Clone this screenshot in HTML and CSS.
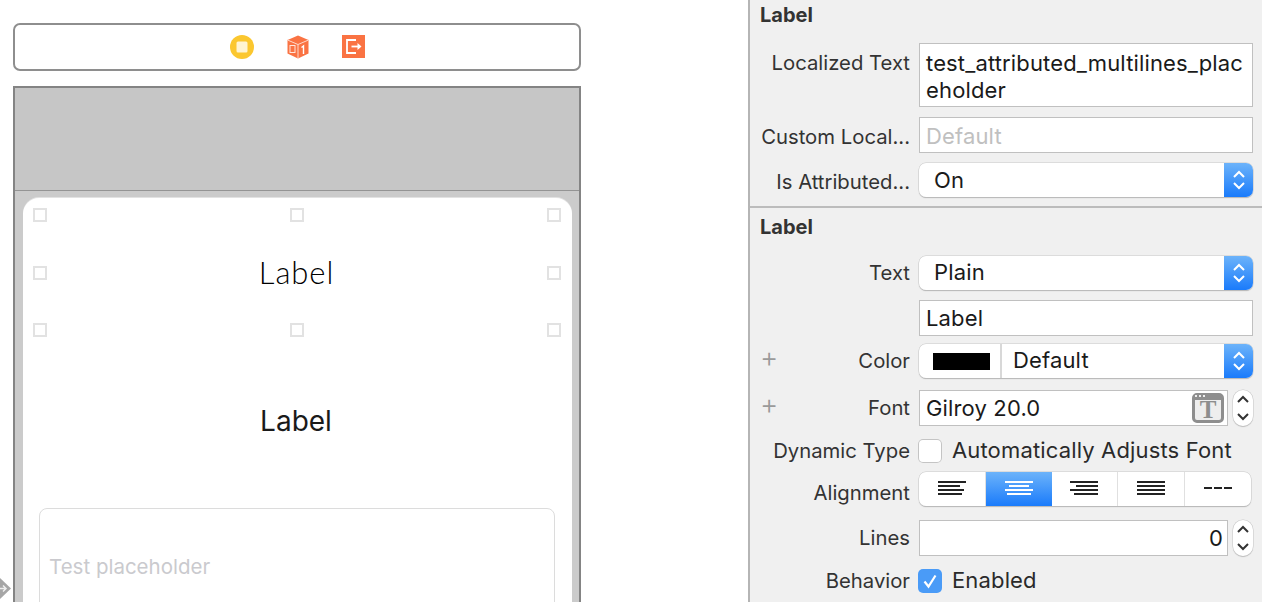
FILE: index.html
```html
<!DOCTYPE html>
<html lang="en">
<head>
<meta charset="utf-8">
<title>Storyboard inspector</title>
<link rel="stylesheet" href="styles.css">
</head>
<body>
<main class="canvas">
  <div class="scene-bar">
    <svg class="dock-icon" width="24" height="24" viewBox="0 0 24 24"><circle cx="12" cy="12" r="12" fill="#fbc72f"/><rect x="6.500" y="6.500" width="11" height="11" rx="1.500" fill="#fff4d2"/></svg>
    <svg class="dock-icon" width="24" height="24" viewBox="0 0 24 24"><path d="M12 .5 22.500 5v13.500L12 23.500 1.500 18.500V5z" fill="#fa7343"/><path d="M1.500 5 12 9.500 22.500 5M12 9.500v14" fill="none" stroke="#ffd9ca" stroke-width="1"/><rect x="4" y="10.500" width="5" height="7" fill="none" stroke="#ffe6dc" stroke-width="1"/><path d="M15.500 12.500 17.500 11v8" fill="none" stroke="#fff" stroke-width="1.400"/></svg>
    <svg class="dock-icon" width="24" height="24" viewBox="0 0 24 24"><rect width="23" height="23" fill="#fa7343"/><path d="M14 5H5v13h9" fill="none" stroke="#fff" stroke-width="1.800"/><path d="M9.500 11.500h7" stroke="#fff" stroke-width="1.800"/><path d="m15.500 8 4 3.500-4 3.500z" fill="#fff"/></svg>
  </div>
  <div class="scene">
    <div class="nav-area"></div>
    <section class="card">
      <span class="handle handle-tl"></span><span class="handle handle-tc"></span><span class="handle handle-tr"></span>
      <span class="handle handle-ml"></span><span class="handle handle-mr"></span>
      <span class="handle handle-bl"></span><span class="handle handle-bc"></span><span class="handle handle-br"></span>
      <div class="title-label">Label</div>
      <div class="body-label">Label</div>
      <div class="text-box">Test placeholder</div>
    </section>
  </div>
  <svg class="entry-arrow" width="12" height="24" viewBox="0 0 12 24"><path d="M0 1 11 11.500 0 22z" fill="#a6a6a6"/><path d="M0 11.500h6M3 8.500l3 3-3 3" fill="none" stroke="#eee" stroke-width="1.500"/></svg>
</main>
<aside class="inspector">
  <section class="group group-first">
    <h2 class="group-title">Label</h2>
    <div class="row row-top">
      <div class="row-label">Localized Text</div>
      <div class="field field-multi">test_attributed_multilines_plac<br>eholder</div>
    </div>
    <div class="row gap-10">
      <div class="row-label">Custom Local...</div>
      <div class="field field-placeholder">Default</div>
    </div>
    <div class="row gap-10">
      <div class="row-label">Is Attributed...</div>
      <div class="select"><span class="select-value">On</span><span class="select-arrows"><svg width="16" height="22" viewBox="0 0 16 22"><path d="m3 8 5-5 5 5M3 14l5 5 5-5" fill="none" stroke="#fff" stroke-width="2"/></svg></span></div>
    </div>
  </section>
  <section class="group group-second">
    <h2 class="group-title">Label</h2>
    <div class="row row-second">
      <div class="row-label">Text</div>
      <div class="select"><span class="select-value">Plain</span><span class="select-arrows"><svg width="16" height="22" viewBox="0 0 16 22"><path d="m3 8 5-5 5 5M3 14l5 5 5-5" fill="none" stroke="#fff" stroke-width="2"/></svg></span></div>
    </div>
    <div class="row gap-10">
      <div class="row-label"></div>
      <div class="field">Label</div>
    </div>
    <div class="row gap-8">
      <div class="row-label"><span class="plus">+</span>Color</div>
      <div class="select"><span class="swatch-cell"><span class="swatch"></span></span><span class="select-value select-value-color">Default</span><span class="select-arrows"><svg width="16" height="22" viewBox="0 0 16 22"><path d="m3 8 5-5 5 5M3 14l5 5 5-5" fill="none" stroke="#fff" stroke-width="2"/></svg></span></div>
    </div>
    <div class="row gap-12">
      <div class="row-label"><span class="plus">+</span>Font</div>
      <div class="field field-short">Gilroy 20.0<span class="font-button"><span class="font-dots"></span><span class="font-t">T</span></span></div>
      <div class="stepper"><svg width="14" height="28" viewBox="0 0 14 28"><path d="m2 8 5-5 5 5M2 20l5 5 5-5" fill="none" stroke="#333" stroke-width="2"/></svg></div>
    </div>
    <div class="row gap-13 row-check">
      <div class="row-label">Dynamic Type</div>
      <span class="check"></span><span class="check-text">Automatically Adjusts Font</span>
    </div>
    <div class="row gap-9">
      <div class="row-label row-label-low">Alignment</div>
      <div class="segments">
        <span class="segment"><svg width="28" height="16" viewBox="0 0 28 16"><path d="M0 1h28M0 5h22M0 9h26M0 13h24" stroke="#222" stroke-width="2"/></svg></span>
        <span class="segment segment-on"><svg width="28" height="16" viewBox="0 0 28 16"><path d="M0 1h28M4 5h20M0 9h28M2 13h24" stroke="#fff" stroke-width="2"/></svg></span>
        <span class="segment"><svg width="28" height="16" viewBox="0 0 28 16"><path d="M0 1h28M6 5h22M0 9h28M4 13h24" stroke="#222" stroke-width="2"/></svg></span>
        <span class="segment"><svg width="28" height="16" viewBox="0 0 28 16"><path d="M0 1h28M0 5h28M0 9h28M0 13h28" stroke="#222" stroke-width="2"/></svg></span>
        <span class="segment"><svg width="28" height="16" viewBox="0 0 28 16"><path d="M0 7h8M10 7h8M20 7h8" stroke="#222" stroke-width="2"/></svg></span>
      </div>
    </div>
    <div class="row gap-14">
      <div class="row-label">Lines</div>
      <div class="field field-short field-number">0</div>
      <div class="stepper"><svg width="14" height="28" viewBox="0 0 14 28"><path d="m2 8 5-5 5 5M2 20l5 5 5-5" fill="none" stroke="#333" stroke-width="2"/></svg></div>
    </div>
    <div class="row gap-13 row-check">
      <div class="row-label">Behavior</div>
      <span class="check check-on"><svg width="24" height="24" viewBox="0 0 24 24"><path d="m6.500 12.500 4 5 7-11" fill="none" stroke="#fff" stroke-width="2.200"/></svg></span><span class="check-text">Enabled</span>
    </div>
  </section>
</aside>
</body>
</html>
```

FILE: styles.css
```css
* { box-sizing: border-box; }
html, body { height: 100%; }
body {
  margin: 0;
  height: 602px;
  overflow: hidden;
  display: flex;
  background: #fff;
  font-family: Inter, "Liberation Sans", sans-serif;
  color: #1c1c1c;
}

/* storyboard canvas */
.canvas {
  position: relative;
  width: 748px;
  flex: none;
  padding: 23px 0 0 13px;
  overflow: hidden;
}
.scene-bar {
  width: 568px;
  height: 48px;
  border: 2px solid #8e8e8e;
  border-radius: 7px;
  display: flex;
  justify-content: center;
  align-items: center;
  gap: 32px;
  padding-left: 1px;
}
.dock-icon { flex: none; }
.scene {
  width: 568px;
  height: 520px;
  margin: 15px 0 0;
  border: 2px solid #848484;
  border-bottom: 0;
  background: #cbcbcb;
}
.nav-area {
  height: 103px;
  background: #c6c6c6;
  border-bottom: 1px solid #949494;
}
.card {
  position: relative;
  width: 549px;
  height: 420px;
  margin: 7px 0 0 8px;
  padding-top: 56px;
  background: #fff;
  border-radius: 16px 16px 0 0;
  box-shadow: 0 -1px 0 #e2e2e2;
}
.handle {
  position: absolute;
  width: 14px;
  height: 14px;
  border: 2px solid #e2e2e2;
  background: #fff;
}
.handle-tl, .handle-tc, .handle-tr { top: 10px; }
.handle-ml, .handle-mr { top: 68px; }
.handle-bl, .handle-bc, .handle-br { top: 125px; }
.handle-tl, .handle-ml, .handle-bl { left: 10px; }
.handle-tc, .handle-bc { left: 267px; }
.handle-tr, .handle-mr, .handle-br { left: 524px; }
.title-label {
  padding-right: 2px;
  text-align: center;
  font: 300 31px/36px Lato, sans-serif;
  color: #000;
  letter-spacing: 0.900px;
}
.body-label {
  margin-top: 113px;
  padding-right: 3px;
  text-align: center;
  font: 400 28px/36px Inter, sans-serif;
  color: #1a1a1a;
}
.text-box {
  width: 516px;
  height: 140px;
  margin: 69px 0 0 16px;
  padding: 45px 9px 0;
  border: 1px solid #dcdcdc;
  border-radius: 8px;
  font-size: 20.500px;
  line-height: 26px;
  color: #cacace;
}
.entry-arrow { position: absolute; left: 0; top: 577px; }

/* inspector */
.inspector {
  flex: 1;
  background: #f0f0f0;
  border-left: 2px solid #b5b5b5;
}
.group-first { height: 208px; border-bottom: 2px solid #bcbcbc; }
.group-second { padding-top: 4px; }
.group-title {
  margin: 0;
  padding-left: 10px;
  font-size: 20px;
  font-weight: 700;
  line-height: 30px;
  color: #333;
}
.row {
  display: flex;
  align-items: center;
  gap: 9px;
}
.row-top { margin-top: 13px; align-items: flex-start; }
.row-top .row-label { margin-top: 8px; }
.row-second { margin-top: 14px; }
.gap-8 { margin-top: 8px; }
.gap-9 { margin-top: 9px; }
.gap-10 { margin-top: 10px; }
.gap-12 { margin-top: 12px; }
.gap-13 { margin-top: 13px; }
.gap-14 { margin-top: 14px; }
.row-label {
  width: 160px;
  flex: none;
  padding-left: 10px;
  display: flex;
  justify-content: flex-end;
  font-size: 20.300px;
  line-height: 24px;
  white-space: nowrap;
  color: #333;
}
.group-first .row .row-label { padding-top: 3px; }
.group-first .row-top .row-label { padding-top: 0; }
.row-label-low { padding-top: 8px; }
.plus {
  margin-top: -2px;
  margin-right: auto;
  font-size: 28px;
  line-height: 20px;
  font-weight: 300;
  color: #9a9a9a;
}
.field {
  position: relative;
  width: 334px;
  height: 36px;
  padding: 0 6px;
  background: #fff;
  border: 1.500px solid #c0c0c0;
  font-size: 22px;
  letter-spacing: 0.150px;
  line-height: 34px;
  color: #1a1a1a;
  white-space: nowrap;
}
.field-multi { height: 64px; line-height: 27px; padding-top: 6px; }
.field-placeholder { color: #c0c0c0; line-height: 36px; }
.field-short { width: 309px; }
.field-number { text-align: right; padding-right: 4px; }
.select {
  width: 334px;
  height: 34px;
  display: flex;
  align-items: center;
  background: #fff;
  border-radius: 7px;
  box-shadow: 0 0 0 0.500px #c8c8c8, 0 1px 1px rgba(0, 0, 0, .3);
  overflow: hidden;
  font-size: 22px;
  letter-spacing: 0.150px;
  color: #1a1a1a;
}
.select-value { flex: 1; padding-left: 15px; }
.group-second .select-value { padding-bottom: 2px; }
.select-value-color { padding-left: 11px; }
.select-arrows {
  width: 29px;
  height: 100%;
  display: flex;
  align-items: center;
  justify-content: center;
  background: linear-gradient(#6cb3fa, #1a7bfb);
}
.swatch-cell {
  width: 83px;
  height: 100%;
  display: flex;
  align-items: center;
  justify-content: center;
  padding-left: 3px;
  border-right: 2px solid #d8d8d8;
}
.swatch { width: 57px; height: 17px; background: #000; }
.font-button {
  position: absolute;
  right: 3px;
  top: 2px;
  width: 32px;
  height: 30px;
  background: #eee;
  border: 3px solid #8e8e8e;
  border-top-width: 7px;
  border-radius: 5px;
  display: flex;
  justify-content: center;
}
.font-dots {
  position: absolute;
  left: 0;
  top: -5px;
  width: 12px;
  height: 2px;
  background: repeating-linear-gradient(90deg, #eee 0 2px, transparent 2px 4px);
}
.font-t {
  font: 700 25px/20px "Liberation Serif", serif;
  letter-spacing: 0;
  color: #8e8e8e;
}
.stepper {
  width: 20px;
  height: 36px;
  margin-left: -4px;
  display: flex;
  align-items: center;
  justify-content: center;
  background: #fff;
  border-radius: 10px;
  box-shadow: 0 0 0 0.500px #c8c8c8, 0 1px 1px rgba(0, 0, 0, .25);
}
.row-check { gap: 8px; }
.check {
  width: 24px;
  height: 24px;
  flex: none;
  background: #fff;
  border-radius: 5px;
  box-shadow: inset 0 0 0 1px #c4c4c4;
}
.check-on { background: #4a9bf7; box-shadow: none; }
.check-on svg { display: block; }
.check-text { margin-left: 2px; padding-bottom: 2px; font-size: 22px; letter-spacing: 0.150px; line-height: 22px; color: #2a2a2a; }
.segments {
  width: 332px;
  height: 34px;
  display: flex;
  background: #fff;
  border-radius: 7px;
  overflow: hidden;
  box-shadow: 0 0 0 0.500px #c8c8c8, 0 1px 1px rgba(0, 0, 0, .3);
}
.segment {
  flex: 1;
  display: flex;
  align-items: center;
  justify-content: center;
  border-right: 1px solid #e0e0e0;
}
.segment:last-child { border-right: 0; }
.segment-on { background: linear-gradient(#6cb3fa, #1a7bfb); border-right: 0; }
```
